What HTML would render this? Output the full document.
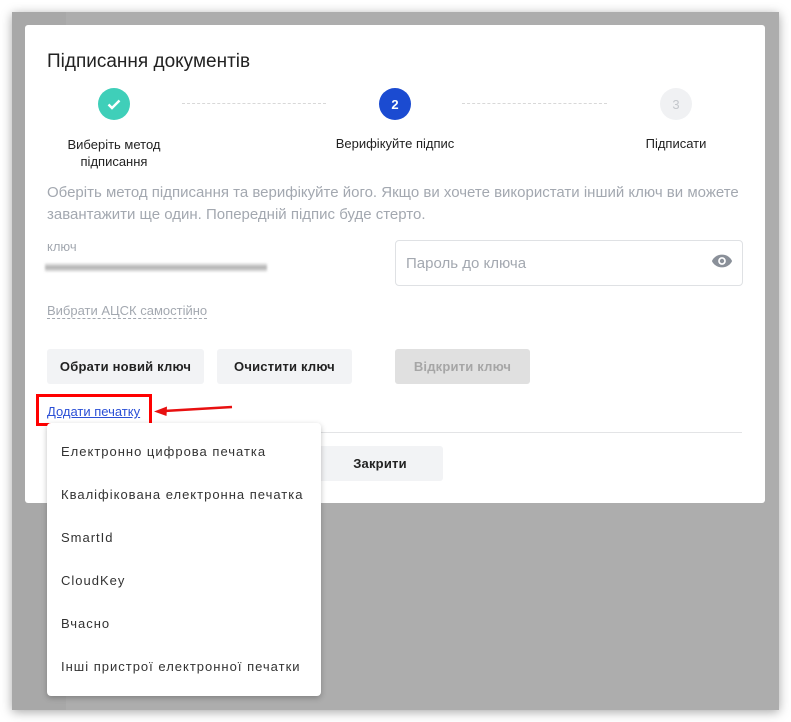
<!DOCTYPE html>
<html><head><meta charset="utf-8"><style>
*{margin:0;padding:0;box-sizing:border-box}
body{width:791px;height:722px;background:#fff;position:relative;overflow:hidden;font-family:"Liberation Sans",sans-serif}
.abs{position:absolute}
.frame{left:12px;top:12px;width:767px;height:698px;background:#adadad;box-shadow:0 2px 10px rgba(0,0,0,.35)}
.strip{left:12px;top:12px;width:54px;height:698px;background:#a8a8a8}
.modal{left:25px;top:25px;width:740px;height:478px;background:#fff;border-radius:3px}
.t{white-space:nowrap;line-height:1}
.circ{width:32px;height:32px;border-radius:50%;display:flex;align-items:center;justify-content:center;font-size:13px}
.dash{height:0;border-top:1px dashed #d8d8d8}
.btn{height:35px;background:#f2f3f5;border-radius:3px;display:flex;align-items:center;justify-content:center;font-size:13px;font-weight:bold;color:#222;letter-spacing:.2px}
.item{left:61px;font-size:13px;color:#333;letter-spacing:1px}
</style></head><body>
<div class="abs frame"></div>
<div class="abs strip"></div>
<div class="abs modal"></div>
<div class="abs t" style="left:47px;top:52px;font-size:19px;color:#222">Підписання документів</div>

<div class="abs circ" style="left:98px;top:88px;background:#3fcfb9"><svg width="16" height="16" viewBox="0 0 16 16"><path d="M2.5 8.5l3.5 3.5 7.5-7.5" stroke="#fff" stroke-width="2.4" fill="none"/></svg></div>
<div class="abs circ" style="left:379px;top:88px;background:#1b4bd1;color:#fff;font-weight:bold">2</div>
<div class="abs circ" style="left:660px;top:88px;background:#f0f1f3;color:#c4c7cc">3</div>
<div class="abs dash" style="left:182px;top:103px;width:144px"></div>
<div class="abs dash" style="left:462px;top:103px;width:145px"></div>
<div class="abs" style="left:44px;top:136px;width:140px;text-align:center;font-size:13px;color:#222;line-height:17px">Виберіть метод<br>підписання</div>
<div class="abs t" style="left:295px;top:137px;width:200px;text-align:center;font-size:13px;color:#222">Верифікуйте підпис</div>
<div class="abs t" style="left:626px;top:137px;width:100px;text-align:center;font-size:13px;color:#222">Підписати</div>

<div class="abs" style="left:47px;top:182px;width:720px;font-size:15px;color:#a3a8b0;line-height:22px">Оберіть метод підписання та верифікуйте його. Якщо ви хочете використати інший ключ ви можете<br>завантажити ще один. Попередній підпис буде стерто.</div>
<div class="abs t" style="left:47px;top:240px;font-size:13px;color:#a3a8b0">ключ</div>
<div class="abs" style="left:45px;top:263px;width:222px;height:9px;background:linear-gradient(#eee,#999 50%,#eee);filter:blur(1px);opacity:.8"></div>

<div class="abs" style="left:395px;top:240px;width:348px;height:46px;border:1px solid #dfe1e4;border-radius:4px"></div>
<div class="abs t" style="left:406px;top:256px;font-size:15px;color:#a3a8b0">Пароль до ключа</div>
<svg class="abs" style="left:711px;top:253px" width="22" height="16" viewBox="0 0 24 16"><path d="M12 1C6.5 1 2.5 4.5 1 8c1.5 3.5 5.5 7 11 7s9.5-3.5 11-7C21.5 4.5 17.5 1 12 1z" fill="#8a9099"/><circle cx="12" cy="8" r="4.2" fill="#fff"/><circle cx="12" cy="8" r="2.4" fill="#8a9099"/></svg>

<div class="abs t" style="left:47px;top:304px;font-size:13px;color:#a3a8b0;border-bottom:1px dashed #a3a8b0;padding-bottom:1px">Вибрати АЦСК самостійно</div>

<div class="abs btn" style="left:47px;top:349px;width:157px">Обрати новий ключ</div>
<div class="abs btn" style="left:217px;top:349px;width:135px">Очистити ключ</div>
<div class="abs btn" style="left:395px;top:349px;width:135px;background:#e0e0e0;color:#a6a6a6">Відкрити ключ</div>

<div class="abs" style="left:47px;top:432px;width:695px;height:1px;background:#e3e4e6"></div>
<div class="abs btn" style="left:315px;top:446px;width:128px;padding-left:2px">Закрити</div>

<div class="abs" style="left:36px;top:394px;width:116px;height:32px;border:3px solid #f00"></div>
<div class="abs t" style="left:47px;top:405px;font-size:13px;color:#2a4fd6;text-decoration:underline">Додати печатку</div>
<svg class="abs" style="left:150px;top:400px" width="90" height="20" viewBox="0 0 90 20"><path d="M82 7L14 11" stroke="#e81010" stroke-width="2.5"/><path d="M4 11.5L17 6.5 16.5 16z" fill="#e81010"/></svg>

<div class="abs" style="left:47px;top:423px;width:274px;height:273px;background:#fff;border-radius:4px;box-shadow:0 2px 6px rgba(0,0,0,.25)"></div>
<div class="abs t item" style="top:445px">Електронно цифрова печатка</div>
<div class="abs t item" style="top:488px">Кваліфікована електронна печатка</div>
<div class="abs t item" style="top:531px">SmartId</div>
<div class="abs t item" style="top:574px">CloudKey</div>
<div class="abs t item" style="top:617px">Вчасно</div>
<div class="abs t item" style="top:660px">Інші пристрої електронної печатки</div>
</body></html>
